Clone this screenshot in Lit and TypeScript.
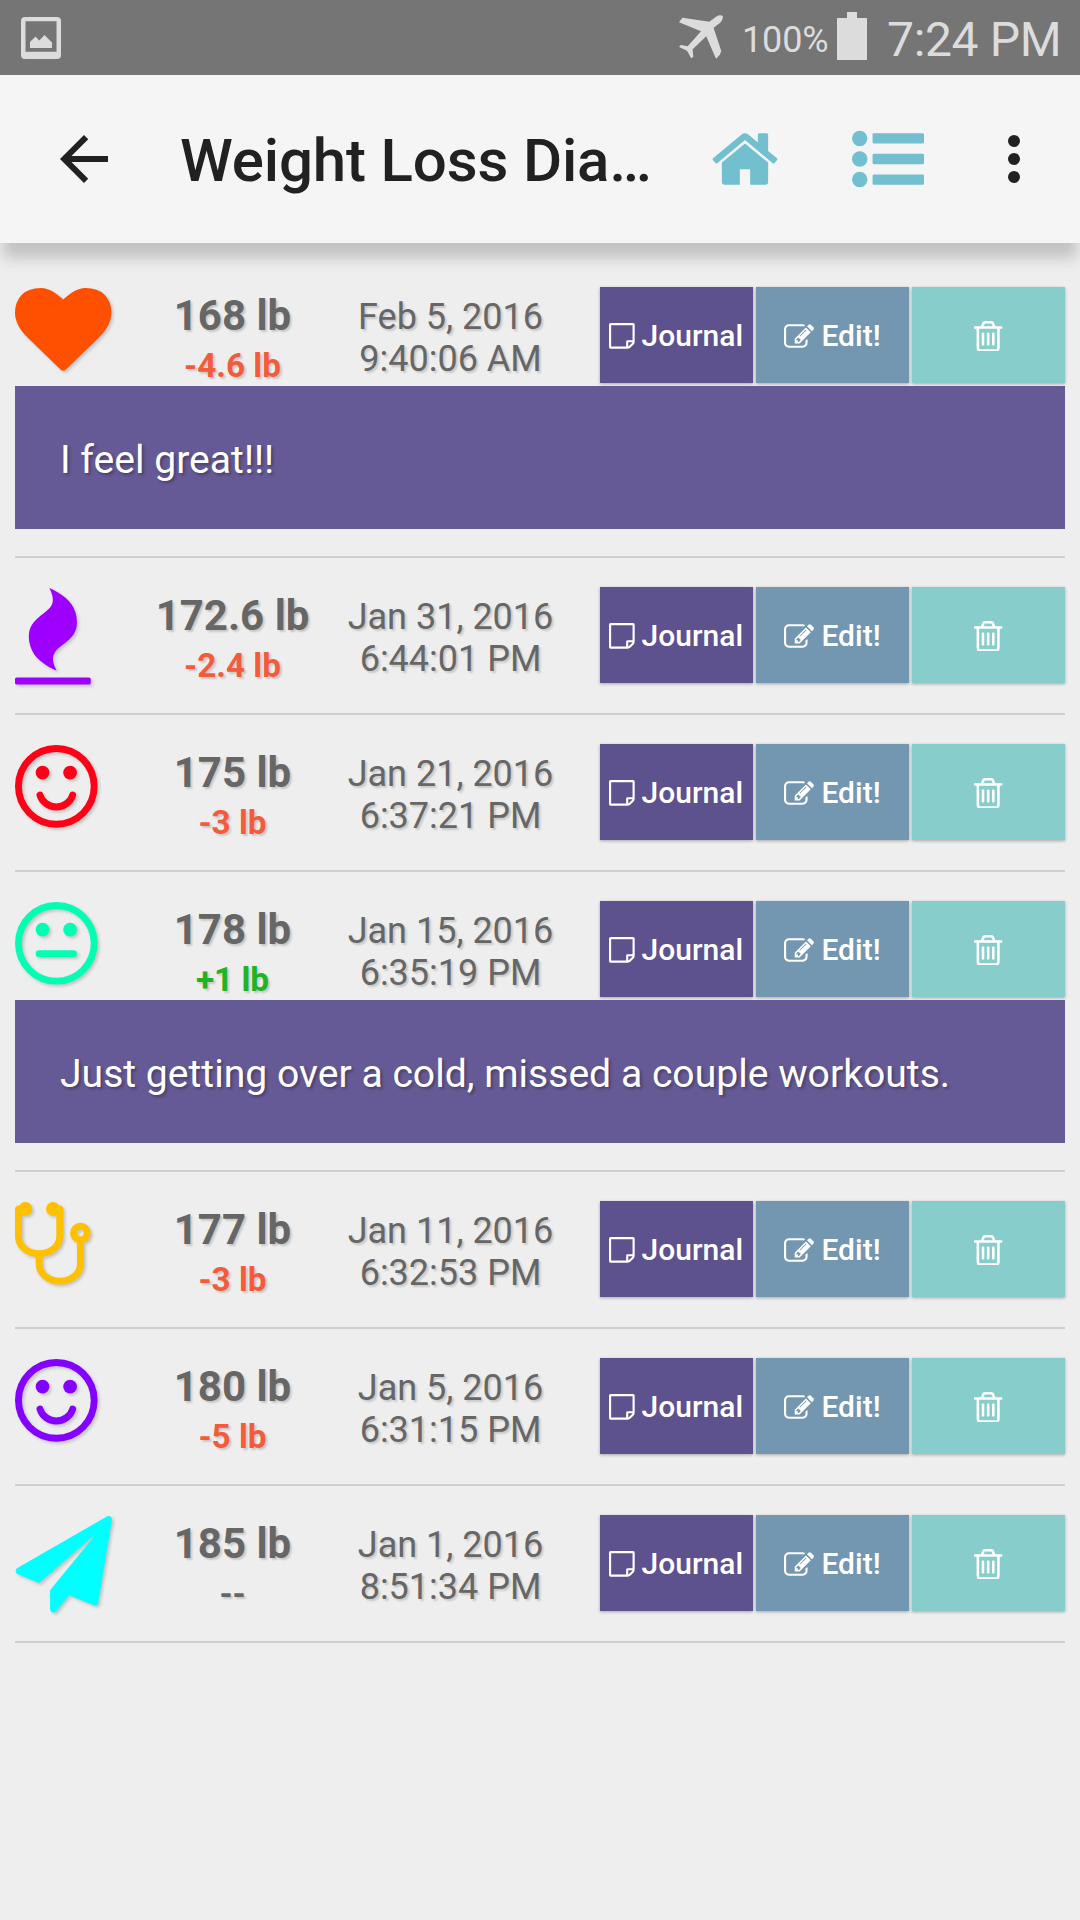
import { LitElement, html, css, svg, nothing } from "lit";
import { customElement, property } from "lit/decorators.js";

type Mood = "heart" | "fire" | "smile" | "meh" | "stethoscope" | "plane";

interface Entry {
  mood: Mood;
  color: string;
  weight: string;
  delta: string;
  trend: "down" | "up" | "none";
  date: string;
  time: string;
  note?: string;
}

const ENTRIES: Entry[] = [
  { mood: "heart", color: "#ff4f00", weight: "168 lb", delta: "-4.6 lb", trend: "down", date: "Feb 5, 2016", time: "9:40:06 AM", note: "I feel great!!!" },
  { mood: "fire", color: "#9d00ff", weight: "172.6 lb", delta: "-2.4 lb", trend: "down", date: "Jan 31, 2016", time: "6:44:01 PM" },
  { mood: "smile", color: "#ff0016", weight: "175 lb", delta: "-3 lb", trend: "down", date: "Jan 21, 2016", time: "6:37:21 PM" },
  { mood: "meh", color: "#00ffb3", weight: "178 lb", delta: "+1 lb", trend: "up", date: "Jan 15, 2016", time: "6:35:19 PM", note: "Just getting over a cold, missed a couple workouts." },
  { mood: "stethoscope", color: "#ffc000", weight: "177 lb", delta: "-3 lb", trend: "down", date: "Jan 11, 2016", time: "6:32:53 PM" },
  { mood: "smile", color: "#8400ff", weight: "180 lb", delta: "-5 lb", trend: "down", date: "Jan 5, 2016", time: "6:31:15 PM" },
  { mood: "plane", color: "#00ffff", weight: "185 lb", delta: "--", trend: "none", date: "Jan 1, 2016", time: "8:51:34 PM" },
];

const face = svg`
  <circle cx="896" cy="896" r="704" fill="none" stroke="currentColor" stroke-width="128"/>
  <circle cx="640" cy="640" r="128"/><circle cx="1152" cy="640" r="128"/>`;

/* Each glyph is drawn on a 1792-unit em; box is its x, y, width and height. */
const MOODS: Record<Mood, { box: [number, number, number, number]; shape: unknown }> = {
  heart: {
    box: [0, 128, 1792, 1536],
    shape: svg`<path d="M896 1664q-26 0-44-18l-624-602q-10-8-27.5-26t-55.5-65.5-68-97.5-53.5-121-23.5-138q0-220 127-344t351-124q62 0 126.5 21.5t120 58 95.5 68.5 76 68q36-36 76-68t95.5-68.5 120-58 126.5-21.5q224 0 351 124t127 344q0 221-229 450l-623 600q-18 18-44 18z"/>`,
  },
  fire: {
    box: [192, 0, 1408, 1792],
    shape: svg`<path d="M1600 1696v64q0 13-9.5 22.5t-22.5 9.5h-1344q-13 0-22.5-9.5t-9.5-22.5v-64q0-13 9.5-22.5t22.5-9.5h1344q13 0 22.5 9.5t9.5 22.5zm-256-1056q0 78-24.5 144t-64 112.5-87.5 88-96 77.5-87.5 72-64 81.5-24.5 96.5q0 96 67 224l-4-1 1 1q-90-41-160-83t-138.5-100-113.5-122.5-72.5-150.5-27.5-184q0-78 24.5-144t64-112.5 87.5-88 96-77.5 87.5-72 64-81.5 24.5-96.5q0-94-66-224l3 1-1-1q90 41 160 83t138.5 100 113.5 122.5 72.5 150.5 27.5 184z"/>`,
  },
  smile: {
    box: [128, 128, 1536, 1536],
    shape: svg`${face}<path d="M1262 1075q-37 121-138 195t-228 74-228-74-138-195q-8-25 4-48.5t38-31.5q25-8 48.5 4t31.5 38q25 80 92.5 129.5t151.5 49.5 151.5-49.5 92.5-129.5q8-26 32-38t49-4 37 31.5 4 48.5z"/>`,
  },
  meh: {
    box: [128, 128, 1536, 1536],
    shape: svg`${face}<rect x="512" y="1024" width="768" height="128" rx="64"/>`,
  },
  stethoscope: {
    box: [64, 0, 1408, 1536],
    shape: svg`<path d="M1344 576q0-26-19-45t-45-19-45 19-19 45 19 45 45 19 45-19 19-45zm128 0q0 62-35.5 111t-92.5 70v395q0 159-131.5 271.5t-316.5 112.5-316.5-112.5-131.5-271.5v-132q-164-20-274-128t-110-252v-512q0-26 19-45t45-19q6 0 16 2 17-30 47-48t65-18q53 0 90.5 37.5t37.5 90.5-37.5 90.5-90.5 37.5q-33 0-64-18v402q0 106 94 181t226 75 226-75 94-181v-402q-31 18-64 18-53 0-90.5-37.5t-37.5-90.5 37.5-90.5 90.5-37.5q35 0 65 18t47 48q10-2 16-2 26 0 45 19t19 45v512q0 144-110 252t-274 128v132q0 106 94 181t226 75 226-75 94-181v-395q-57-21-92.5-70t-35.5-111q0-80 56-136t136-56 136 56 56 136z"/>`,
  },
  plane: {
    box: [-12, 0, 1792, 1792],
    shape: svg`<path d="M1764 11q33 24 27 64l-256 1536q-5 29-32 45-14 8-31 8-11 0-24-5l-453-185-242 295q-18 23-49 23-13 0-22-4-19-7-30.5-23.5t-11.5-36.5v-349l864-1059-1069 925-395-162q-37-14-40-55-2-40 32-59l1664-960q15-9 32-9 20 0 36 11z"/>`,
  },
};

const PX = 96.4 / 1792;

@customElement("mood-icon")
export class MoodIcon extends LitElement {
  @property() mood: Mood = "smile";
  static styles = css`
    :host { display: block; padding-top: 0.6px; }
    .glyph { display: block; overflow: visible; fill: currentColor; filter: drop-shadow(2.5px 2.5px 1.5px rgba(0, 0, 0, 0.18)); }
  `;
  render() {
    const { box, shape } = MOODS[this.mood];
    return html`<svg class="glyph" width=${box[2] * PX} height=${box[3] * PX} viewBox=${box.join(" ")}>${shape}</svg>`;
  }
}

@customElement("status-bar")
export class StatusBar extends LitElement {
  static styles = css`
    :host { display: flex; height: 75px; background: #757575; color: #dcdcdc; fill: currentColor; padding: 0 20px 0 21px; box-sizing: border-box; }
    svg { display: block; flex: none; }
    .shot { margin-top: 17px; }
    .air { margin: 15px 0 0 auto; }
    .pct { font-size: 36px; line-height: 36px; letter-spacing: -0.15px; margin: 22px 0 0 19px; width: 84px; white-space: nowrap; }
    .bat { margin: 12px 0 0 11px; }
    .clock { font-size: 48px; line-height: 48px; letter-spacing: -0.35px; margin: 16px 0 0 20px; width: 173px; white-space: nowrap; }
  `;
  render() {
    return html`
      <svg class="shot" width="40" height="42" viewBox="0 0 40 42">
        <path fill-rule="evenodd" d="M4 0H36Q40 0 40 4V38Q40 42 36 42H4Q0 42 0 38V4Q0 0 4 0ZM4.5 4.3V34.7H35.5V4.3Z"/>
        <path d="M9 31V25L14.5 19.5L18.3 23.5L23.5 18L31 25.5V31Z"/>
      </svg>
      <svg class="air" width="44" height="44" viewBox="401 46 126 132" preserveAspectRatio="none">
        <path d="M411 54L488 66L507 51Q517 45 526 48Q529 58 519 69L500 84L522 154L518 165L507 177L479 110L440 149L442 171L436 176L424 153L401 142L406 136L426 140L464 95L401 68Z"/>
      </svg>
      <span class="pct">100%</span>
      <svg class="bat" width="30" height="48" viewBox="0 0 30 48"><path d="M10 0H20V6H30V48H0V6H10Z"/></svg>
      <span class="clock">7:24 PM</span>
    `;
  }
}

@customElement("app-toolbar")
export class AppToolbar extends LitElement {
  static styles = css`
    :host { display: flex; align-items: flex-start; height: 168px; box-sizing: border-box; padding: 48px 0 0 48px; background: #f5f5f5; color: #212121; box-shadow: 0 18px 14px -3px rgba(0, 0, 0, 0.19); }
    svg { display: block; flex: none; fill: currentColor; }
    .title { font-size: 60px; line-height: 72px; font-weight: 500; letter-spacing: -0.15px; margin: 2px 0 0 60px; width: 480px; white-space: nowrap; }
    .tint { color: #71bfcf; }
    .home { margin-left: 49px; }
    .list { margin-left: 71px; }
    .more { margin: 12px 0 0 84px; }
  `;
  render() {
    return html`
      <svg width="72" height="72" viewBox="0 0 24 24"><path d="M20 11H7.83l5.59-5.59L12 4l-8 8 8 8 1.41-1.41L7.83 13H20v-2z"/></svg>
      <span class="title">Weight Loss Dia…</span>
      <svg class="tint home" width="72" height="72" viewBox="0 0 1792 1792"><path d="M1472 992v480q0 26-19 45t-45 19h-384v-384h-256v384h-384q-26 0-45-19t-19-45v-480q0-1 .5-3t.5-3l575-474 575 474q1 2 1 6zm223-69l-62 74q-8 9-21 11h-3q-13 0-21-7l-692-577-692 577q-12 8-24 7-13-2-21-11l-62-74q-8-10-7-23.5t11-21.5l719-599q32-26 76-26t76 26l244 204v-195q0-14 9-23t23-9h192q14 0 23 9t9 23v408l219 182q10 8 11 21.5t-7 23.5z"/></svg>
      <svg class="tint list" width="72" height="72" viewBox="0 0 1792 1792">
        ${[384, 896, 1408].map((y) => svg`<circle cx="192" cy=${y} r="192"/><rect x="512" y=${y - 128} width="1280" height="256" rx="32"/>`)}
      </svg>
      <svg class="more" width="12" height="48" viewBox="0 0 12 48"><circle cx="6" cy="6" r="6"/><circle cx="6" cy="24" r="6"/><circle cx="6" cy="42" r="6"/></svg>
    `;
  }
}

@customElement("diary-row")
export class DiaryRow extends LitElement {
  @property({ attribute: false }) entry!: Entry;
  static styles = css`
    :host { display: block; padding-bottom: 27px; border-bottom: 2px solid #cfcfcf; }
    .main { display: grid; grid-template-columns: 120px 195px 241px 464px; justify-content: start; height: 99px; color: #666; text-align: center; text-shadow: 2px 2px 2px rgba(0, 0, 0, 0.16); white-space: nowrap; }
    .actions { grid-column: 4; margin-left: 29px; display: grid; grid-template-columns: repeat(3, 153px); gap: 3px; height: 96px; text-shadow: none; }
    .weight { padding-top: 9px; font-weight: 700; }
    .value { font-size: 42px; line-height: 40px; }
    .delta { font-size: 33.3px; line-height: 40px; margin-top: 10px; }
    .down { color: #f25c3d; }
    .up { color: #22b322; }
    .when { padding-top: 9px; font-size: 36px; line-height: 42px; }
    .btn { display: flex; align-items: center; justify-content: center; color: #fff; font-size: 30px; font-weight: 500; box-shadow: 0 1px 3px rgba(0, 0, 0, 0.3); }
    .btn svg { display: block; fill: currentColor; margin: 2px 7px 0 0; }
    .journal { background: #5d528d; }
    .journal span { margin-right: 1px; }
    .edit { background: #7396b1; }
    .trash { background: #87cdcc; }
    .btn.trash svg { margin: 2px 0 0; }
    .note { background: #655a95; color: #fff; height: 143px; box-sizing: border-box; padding-left: 45px; font-size: 39.13px; line-height: 148px; text-shadow: 2px 2px 3px rgba(0, 0, 0, 0.3); white-space: nowrap; position: relative; }
  `;
  render() {
    const e = this.entry;
    return html`
      <div class="main">
        <mood-icon .mood=${e.mood} style="color:${e.color}"></mood-icon>
        <div class="weight">
          <div class="value">${e.weight}</div>
          <div class="delta ${e.trend}">${e.delta}</div>
        </div>
        <div class="when"><div>${e.date}</div><div>${e.time}</div></div>
        <div class="actions">
          <div class="btn journal">
            <svg width="25.7" height="25.7" viewBox="0 128 1536 1536"><path d="M1400 1280h-248v248q29-10 41-22l185-185q12-12 22-41zm-280-128h288v-896h-1280v1280h896v-288q0-40 28-68t68-28zm416-928v1024q0 40-20 88t-48 76l-184 184q-28 28-76 48t-88 20h-1024q-40 0-68-28t-28-68v-1344q0-40 28-68t68-28h1344q40 0 68 28t28 68z"/></svg>
            <span>Journal</span>
          </div>
          <div class="btn edit">
            <svg width="30" height="24" viewBox="0 128 1792 1408"><path d="M888 1184l116-116-152-152-116 116v56h96v96h56zm440-720q-16-16-33 1l-350 350q-17 17-1 33t33-1l350-350q17-17 1-33zm80 594v190q0 119-84.5 203.5t-203.5 84.5h-832q-119 0-203.5-84.5t-84.5-203.5v-832q0-119 84.5-203.5t203.5-84.5h832q63 0 117 25 15 7 18 23 3 17-9 29l-49 49q-14 14-32 8-23-6-45-6h-832q-66 0-113 47t-47 113v832q0 66 47 113t113 47h832q66 0 113-47t47-113v-126q0-13 9-22l64-64q15-15 35-7t20 29zm-96-738l288 288-672 672h-288v-288zm444 132l-92 92-288-288 92-92q28-28 68-28t68 28l152 152q28 28 28 68t-28 68z"/></svg>
            <span>Edit!</span>
          </div>
          <div class="btn trash">
            <svg width="28.3" height="30.9" viewBox="192 128 1408 1536"><path d="M704 736v576q0 14-9 23t-23 9h-64q-14 0-23-9t-9-23v-576q0-14 9-23t23-9h64q14 0 23 9t9 23zm256 0v576q0 14-9 23t-23 9h-64q-14 0-23-9t-9-23v-576q0-14 9-23t23-9h64q14 0 23 9t9 23zm256 0v576q0 14-9 23t-23 9h-64q-14 0-23-9t-9-23v-576q0-14 9-23t23-9h64q14 0 23 9t9 23zm128 724v-948h-896v948q0 22 7 40.5t14.5 27 10.5 8.5h832q3 0 10.5-8.5t14.5-27 7-40.5zm-672-1076h448l-48-117q-7-9-17-11h-317q-10 2-17 11zm928 32v64q0 14-9 23t-23 9h-96v948q0 83-47 143.5t-113 60.5h-832q-66 0-113-58.5t-47-141.5v-952h-96q-14 0-23-9t-9-23v-64q0-14 9-23t23-9h309l70-167q15-37 54-63t79-26h320q40 0 79 26t54 63l70 167h309q14 0 23 9t9 23z"/></svg>
          </div>
        </div>
      </div>
      ${e.note ? html`<div class="note">${e.note}</div>` : nothing}
    `;
  }
}

@customElement("app-root")
export class AppRoot extends LitElement {
  static styles = css`
    :host { display: flex; flex-direction: column; width: 1080px; height: 1920px; overflow: hidden; background: #eee; font-family: Roboto, sans-serif; }
    .list { display: flex; flex-direction: column; gap: 29px; padding: 44px 15px 0; }
  `;
  render() {
    return html`
      <status-bar></status-bar>
      <app-toolbar></app-toolbar>
      <div class="list">${ENTRIES.map((e) => html`<diary-row .entry=${e}></diary-row>`)}</div>
    `;
  }
}
